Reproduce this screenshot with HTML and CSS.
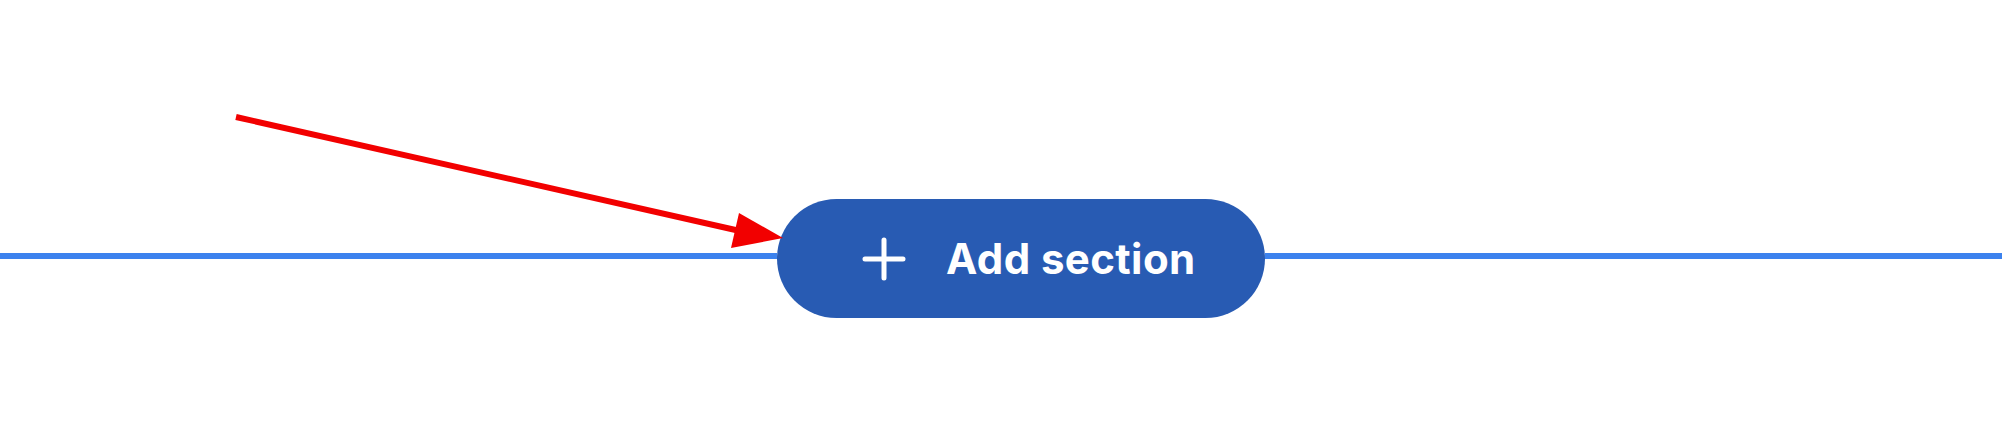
FILE: index.html
```html
<!DOCTYPE html>
<html>
<head>
<meta charset="utf-8">
<link rel="stylesheet" href="styles.css">
</head>
<body>
<div class="stage">
  <div class="divider-row">
    <div class="rule rule-left"></div>
    <button class="add-btn" type="button">
      <svg class="plus" width="44" height="44" viewBox="0 0 44 44" aria-hidden="true">
        <path d="M22 3 V41 M3 22 H41" stroke="#fff" stroke-width="5" stroke-linecap="round" fill="none"/>
      </svg>
      <span class="label">Add section</span>
    </button>
    <div class="rule rule-right"></div>
  </div>
  <svg class="annotation" width="2002" height="434" viewBox="0 0 2002 434" aria-hidden="true">
    <line x1="236" y1="117" x2="740" y2="231" stroke="#f20000" stroke-width="6"/>
    <polygon points="783,238 739,213 731,248" fill="#f20000"/>
  </svg>
</div>
</body>
</html>
```

FILE: styles.css
```css
html, body {
  margin: 0;
  padding: 0;
  background: #ffffff;
}

.stage {
  position: relative;
  width: 2002px;
  height: 434px;
  padding-top: 199px;
  box-sizing: border-box;
}

.divider-row {
  display: flex;
  align-items: center;
  height: 119px;
}

.rule {
  height: 6px;
  background: #3c82ee;
  margin-top: -6px;
}

.rule-left {
  width: 777px;
  flex: none;
}

.rule-right {
  flex: 1;
}

.add-btn {
  flex: none;
  width: 488px;
  height: 119px;
  border: none;
  border-radius: 60px;
  background: #285bb3;
  color: #ffffff;
  display: flex;
  align-items: center;
  padding: 0 0 0 85px;
  gap: 40px;
  box-sizing: border-box;
  cursor: pointer;
}

.plus {
  display: block;
  flex: none;
}

.label {
  font-family: "Inter", "Roboto", sans-serif;
  font-weight: 700;
  font-size: 42px;
  letter-spacing: 0.4px;
  line-height: 1;
}

.annotation {
  position: absolute;
  left: 0;
  top: 0;
  pointer-events: none;
}
```
